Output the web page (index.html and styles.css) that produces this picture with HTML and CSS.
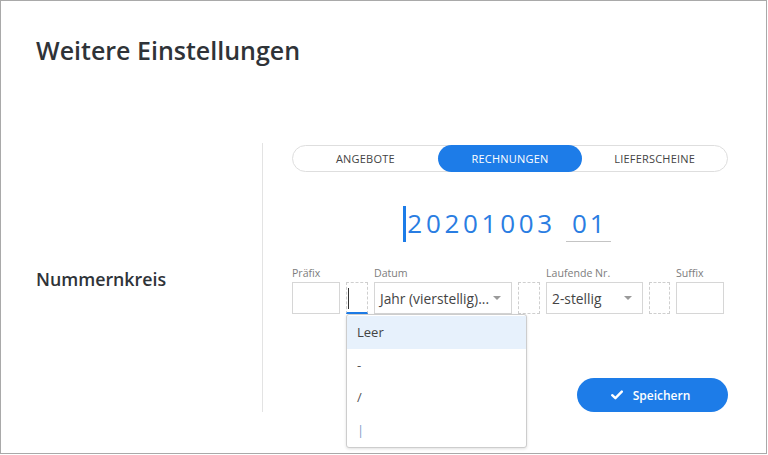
FILE: index.html
```html
<!DOCTYPE html>
<html lang="de">
<head>
<meta charset="utf-8">
<title>Weitere Einstellungen</title>
<link rel="stylesheet" href="styles.css">
</head>
<body>
<div class="frame">
  <header class="header">
    <h1 class="title">Weitere Einstellungen</h1>
  </header>
  <section class="main">
    <div class="side">
      <h2 class="side-title">Nummernkreis</h2>
    </div>
    <div class="content">
      <div class="segment">
        <button class="seg-btn">ANGEBOTE</button>
        <button class="seg-btn seg-active">RECHNUNGEN</button>
        <button class="seg-btn">LIEFERSCHEINE</button>
      </div>
      <div class="number">
        <span class="num-cursor"></span>
        <span class="num-main">20201003</span>
        <span class="num-seq">01</span>
      </div>
      <div class="fields">
        <div class="field f-prefix">
          <div class="label">Präfix</div>
          <div class="box"></div>
        </div>
        <div class="field f-sep">
          <div class="label">&nbsp;</div>
          <div class="box dashed active"><span class="caret-bar"></span></div>
          <ul class="dropdown">
            <li class="opt opt-hl">Leer</li>
            <li class="opt">-</li>
            <li class="opt">/</li>
            <li class="opt opt-pipe">|</li>
          </ul>
        </div>
        <div class="field f-date">
          <div class="label">Datum</div>
          <div class="box select"><span class="sel-text">Jahr (vierstellig)...</span><span class="tri"></span></div>
        </div>
        <div class="field f-sep">
          <div class="label">&nbsp;</div>
          <div class="box dashed"></div>
        </div>
        <div class="field f-run">
          <div class="label">Laufende Nr.</div>
          <div class="box select"><span class="sel-text">2-stellig</span><span class="tri"></span></div>
        </div>
        <div class="field f-sep2">
          <div class="label">&nbsp;</div>
          <div class="box dashed"></div>
        </div>
        <div class="field f-prefix">
          <div class="label">Suffix</div>
          <div class="box"></div>
        </div>
      </div>
      <button class="save">
        <svg class="check" width="12" height="10" viewBox="0 0 12 10"><path d="M1.2 5.2 L4.4 8.2 L10.8 1.6" fill="none" stroke="#fff" stroke-width="2.4" stroke-linecap="round" stroke-linejoin="round"/></svg>
        <span>Speichern</span>
      </button>
    </div>
  </section>
</div>
</body>
</html>
```
FILE: styles.css
```css
* { box-sizing: border-box; }
html, body { margin: 0; padding: 0; background: #fff; }
body { font-family: "Open Sans", "Noto Sans", sans-serif; color: #333; }

.frame {
  width: 767px;
  height: 454px;
  border: 1px solid #a9a9a9;
  background: #fff;
  overflow: hidden;
}

.header {
  height: 142px;
  padding: 32px 0 0 35px;
}
.title {
  margin: 0;
  font-size: 25px;
  line-height: 34px;
  font-weight: 600;
  color: #2f3338;
}

.main {
  display: flex;
  height: 269px;
}
.side {
  width: 262px;
  border-right: 1px solid #e3e3e3;
  display: flex;
  align-items: center;
  padding-left: 35px;
}
.side-title {
  margin: 0;
  font-size: 17.8px;
  line-height: 24px;
  font-weight: 600;
  color: #2f3338;
  position: relative;
  top: 1px;
}

.content {
  width: 465px;
  padding-left: 29px;
  display: flex;
  flex-direction: column;
}

.segment {
  margin-top: 2px;
  height: 27px;
  display: flex;
  border: 1px solid #dedede;
  border-radius: 14px;
}
.seg-btn {
  flex: 1;
  border: 0;
  background: transparent;
  font-family: inherit;
  font-size: 11px;
  color: #444;
  padding: 0;
  margin: -1px 0;
  border-radius: 14px;
  letter-spacing: 0.2px;
}
.seg-active {
  background: #1d7ce8;
  color: #fff;
}

.number {
  margin-top: 34px;
  height: 36px;
  display: flex;
  justify-content: center;
  padding-right: 6px;
}
.num-cursor {
  width: 3px;
  height: 36px;
  background: #1d7ce8;
  margin-right: 1px;
}
.num-main, .num-seq {
  font-size: 26px;
  line-height: 35px;
  letter-spacing: 3.7px;
  color: #2a7de2;
}
.num-seq {
  margin-left: 10px;
  padding: 0 3px 0 6px;
  border-bottom: 1px solid #c4c4c4;
  letter-spacing: 3px;
}

.fields {
  margin-top: 24px;
  display: flex;
  gap: 6px;
}
.field { position: relative; }
.f-prefix { width: 48px; }
.f-sep { width: 22px; }
.f-sep2 { width: 21px; }
.f-date { width: 138px; }
.f-run { width: 97px; }

.label {
  font-size: 10.6px;
  line-height: 14px;
  color: #7d7d7d;
  margin-bottom: 2px;
  white-space: nowrap;
}
.box {
  height: 32px;
  border: 1px solid #d6d6d6;
  background: #fff;
}
.box.dashed {
  border: 1px dashed #cfcfcf;
}
.box.active {
  border-bottom: 2px solid #1d7ce8;
  padding: 5px 0 0 1px;
}
.caret-bar {
  display: block;
  width: 1px;
  height: 21px;
  background: #333;
}
.select {
  display: flex;
  align-items: center;
  justify-content: space-between;
  padding: 0 10px 0 5px;
}
.sel-text {
  font-size: 13.8px;
  color: #444;
  white-space: nowrap;
}
.tri {
  flex: none;
  width: 0;
  height: 0;
  border-left: 4px solid transparent;
  border-right: 4px solid transparent;
  border-top: 4px solid #9a9a9a;
}

.dropdown {
  position: absolute;
  top: 48px;
  left: 0;
  width: 181px;
  margin: 0;
  padding: 1px 0 1px;
  list-style: none;
  background: #fff;
  border: 1px solid #cdcdcd;
  border-radius: 3px;
  box-shadow: 0 1px 3px rgba(0,0,0,0.12);
  z-index: 5;
}
.opt {
  height: 32.5px;
  line-height: 32px;
  padding-left: 10px;
  font-size: 13px;
  color: #555;
}
.opt-hl { background: #e7f1fc; color: #444; }
.opt-pipe { color: #7f9cc8; }

.save {
  align-self: flex-end;
  margin-top: 64px;
  width: 151px;
  height: 34px;
  border: 0;
  border-radius: 17px;
  background: #1d7ce8;
  color: #fff;
  font-family: inherit;
  font-size: 12px;
  font-weight: 600;
  display: flex;
  align-items: center;
  justify-content: center;
  gap: 10px;
  padding: 0 4px 0 0;
}
.check { display: block; }
```
